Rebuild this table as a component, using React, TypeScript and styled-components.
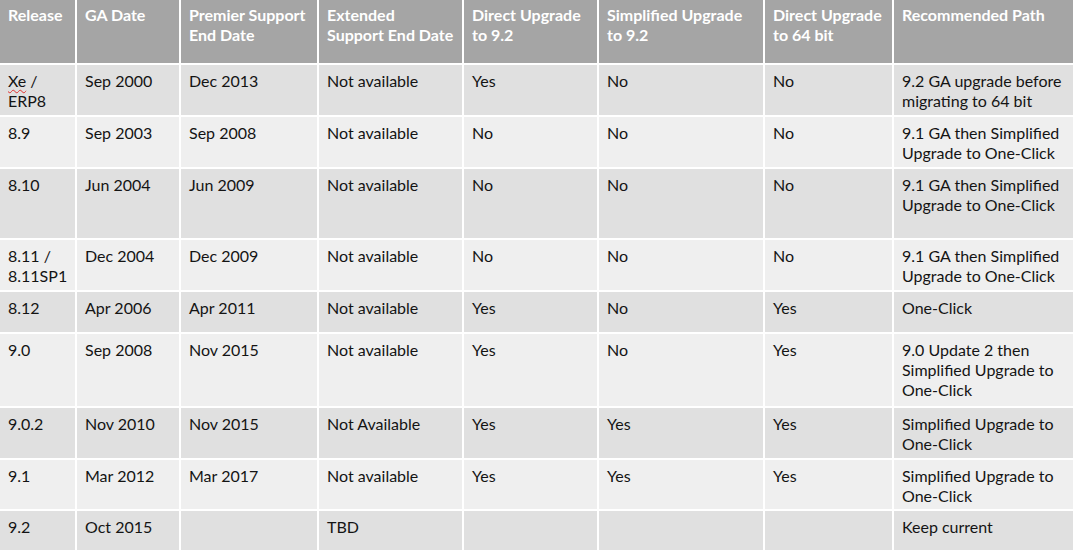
import React from "react";
import styled, { createGlobalStyle } from "styled-components";

const GlobalStyle = createGlobalStyle`
  html, body { margin: 0; padding: 0; background: #ffffff; }
  body { font-family: Lato, "Open Sans", sans-serif; }
`;

const Grid = styled.div`
  display: grid;
  grid-template-columns: 75px 102px 136px 143px 133px 164px 127px 179px;
  grid-template-rows: 63px 50px 50px 69px 50px 40px 72px 50px 49px 39px;
  gap: 2px;
  width: 1073px;
  background: #ffffff;
`;

const HeadCell = styled.div`
  background: #a5a5a5;
  color: #ffffff;
  font-weight: 700;
  font-size: 16px;
  line-height: 20px;
  padding: 5px 4px 0 8px;
  white-space: nowrap;
`;

const Cell = styled.div<{ $band: boolean }>`
  background: ${(p) => (p.$band ? "#e0e0e0" : "#efefef")};
  color: #141414;
  font-size: 16px;
  line-height: 20px;
  padding: 6px 6px 0 8px;
`;

const Squiggle = styled.span`
  text-decoration: underline wavy #e03030;
  text-decoration-thickness: 1px;
  text-underline-offset: 2px;
`;

const headers: React.ReactNode[] = [
  "Release",
  "GA Date",
  <>Premier Support<br />End Date</>,
  <>Extended<br />Support End Date</>,
  <>Direct Upgrade<br />to 9.2</>,
  <>Simplified Upgrade<br />to 9.2</>,
  <>Direct Upgrade<br />to 64 bit</>,
  "Recommended Path",
];

type Row = React.ReactNode[];

const rows: Row[] = [
  [<><Squiggle>Xe</Squiggle> / ERP8</>, "Sep 2000", "Dec 2013", "Not available", "Yes", "No", "No", "9.2 GA upgrade before migrating to 64 bit"],
  ["8.9", "Sep 2003", "Sep 2008", "Not available", "No", "No", "No", "9.1 GA then Simplified Upgrade to One-Click"],
  ["8.10", "Jun 2004", "Jun 2009", "Not available", "No", "No", "No", "9.1 GA then Simplified Upgrade to One-Click"],
  ["8.11 / 8.11SP1", "Dec 2004", "Dec 2009", "Not available", "No", "No", "No", "9.1 GA then Simplified Upgrade to One-Click"],
  ["8.12", "Apr 2006", "Apr 2011", "Not available", "Yes", "No", "Yes", "One-Click"],
  ["9.0", "Sep 2008", "Nov 2015", "Not available", "Yes", "No", "Yes", "9.0 Update 2 then Simplified Upgrade to One-Click"],
  ["9.0.2", "Nov 2010", "Nov 2015", "Not Available", "Yes", "Yes", "Yes", "Simplified Upgrade to One-Click"],
  ["9.1", "Mar 2012", "Mar 2017", "Not available", "Yes", "Yes", "Yes", "Simplified Upgrade to One-Click"],
  ["9.2", "Oct 2015", "", "TBD", "", "", "", "Keep current"],
];

export default function App() {
  return (
    <>
      <GlobalStyle />
      <Grid>
        {headers.map((h, i) => (
          <HeadCell key={i}>{h}</HeadCell>
        ))}
        {rows.map((r, i) =>
          r.map((c, j) => (
            <Cell key={`${i}-${j}`} $band={i % 2 === 0}>
              {c}
            </Cell>
          ))
        )}
      </Grid>
    </>
  );
}
